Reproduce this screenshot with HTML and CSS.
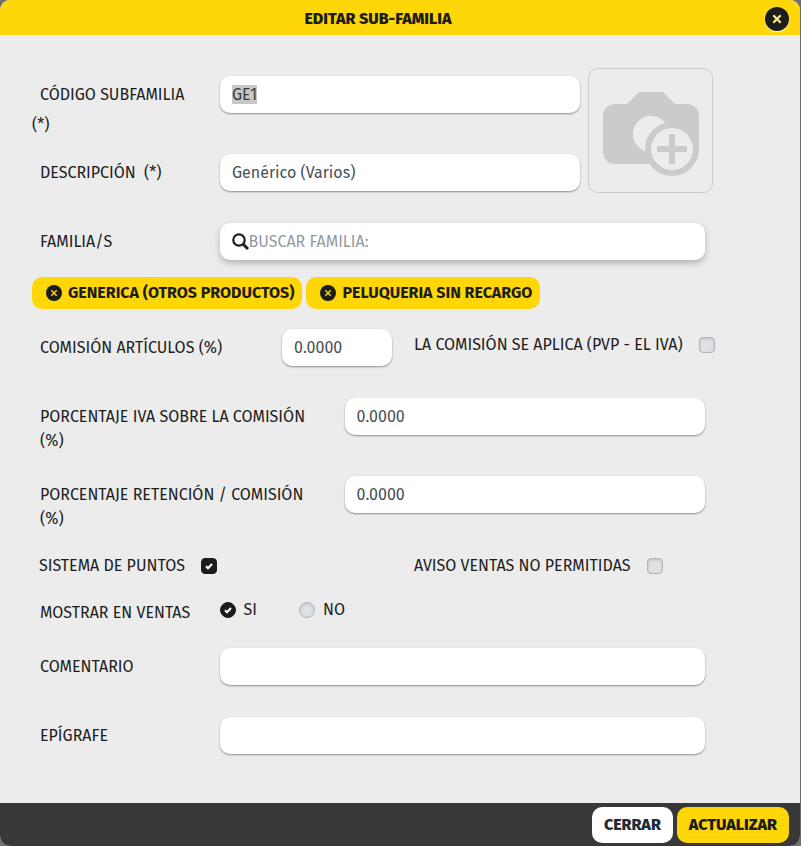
FILE: index.html
```
<!DOCTYPE html>
<html lang="es">
<head>
    <meta charset="UTF-8">
    <meta name="viewport" content="width=device-width, initial-scale=1.0">
    <title>Editar sub-familia</title>
    <link rel="stylesheet" href="styles.css">
</head>
<body>
    <div class="modal" role="dialog" aria-labelledby="modal-title">
        <header class="modal-header">
            <h1 id="modal-title">EDITAR SUB-FAMILIA</h1>
            <button type="button" class="close-btn" aria-label="Cerrar">
                <svg viewBox="0 0 24 24" width="24" height="24">
                    <circle cx="12" cy="12" r="12" fill="#1d1d1d"/>
                    <path d="M8.3 8.3l7.4 7.4M15.7 8.3l-7.4 7.4" stroke="#ffe98a" stroke-width="2.2"/>
                </svg>
            </button>
        </header>

        <form class="modal-form" id="subfamily-form">
            <div class="top">
                <div class="top-fields">
                    <div class="row tall">
                        <label class="label required" for="code"><span>CÓDIGO SUBFAMILIA</span> (*)</label>
                        <input type="text" class="field" id="code" value="GE1">
                    </div>
                    <div class="row">
                        <label class="label required" for="description"><span>DESCRIPCIÓN</span> (*)</label>
                        <input type="text" class="field" id="description" value="Genérico (Varios)">
                    </div>
                </div>
                <button type="button" class="photo" aria-label="Imagen">
                    <svg viewBox="0 0 96 84" width="96" height="84">
                        <path fill="#cbcbcb" d="M36 0h24l12 12h12a12 12 0 0 1 12 12v36H47v12H12A12 12 0 0 1 0 60V24a12 12 0 0 1 12-12h12z"/>
                        <circle cx="48" cy="42" r="18" fill="#ececec"/>
                        <circle cx="69" cy="57" r="27" fill="#cbcbcb"/>
                        <circle cx="69" cy="57" r="21" fill="#ececec"/>
                        <path d="M54 57h30M69 42v30" stroke="#cbcbcb" stroke-width="6"/>
                    </svg>
                </button>
            </div>

            <div class="row short">
                <label class="label" for="family">FAMILIA/S</label>
                <div class="field search">
                    <svg viewBox="0 0 17 17" width="17" height="17">
                        <circle cx="7" cy="7" r="5.7" fill="none" stroke="#1d1d1d" stroke-width="2.2"/>
                        <path d="M11 11l5 5" stroke="#1d1d1d" stroke-width="3"/>
                    </svg>
                    <input type="text" id="family" placeholder="BUSCAR FAMILIA:">
                </div>
            </div>

            <div class="tags">
                <button type="button" class="tag">
                    <svg viewBox="0 0 16 16" width="16" height="16">
                        <circle cx="8" cy="8" r="8" fill="#1d1d1d"/>
                        <path d="M5.3 5.3l5.4 5.4M10.7 5.3l-5.4 5.4" stroke="#ffd708" stroke-width="1.4"/>
                    </svg>
                    GENERICA (OTROS PRODUCTOS)
                </button>
                <button type="button" class="tag">
                    <svg viewBox="0 0 16 16" width="16" height="16">
                        <circle cx="8" cy="8" r="8" fill="#1d1d1d"/>
                        <path d="M5.3 5.3l5.4 5.4M10.7 5.3l-5.4 5.4" stroke="#ffd708" stroke-width="1.4"/>
                    </svg>
                    PELUQUERIA SIN RECARGO
                </button>
            </div>

            <div class="row commission">
                <label class="label" for="commission">COMISIÓN ARTÍCULOS (%)</label>
                <input type="text" class="field" id="commission" value="0.0000">
                <label class="check">LA COMISIÓN SE APLICA (PVP - EL IVA) <input type="checkbox"></label>
            </div>

            <div class="row tall wide">
                <label class="label" for="vat">PORCENTAJE IVA SOBRE LA COMISIÓN (%)</label>
                <input type="text" class="field" id="vat" value="0.0000">
            </div>
            <div class="row tall wide">
                <label class="label" for="retention">PORCENTAJE RETENCIÓN / COMISIÓN (%)</label>
                <input type="text" class="field" id="retention" value="0.0000">
            </div>

            <div class="row checks">
                <label class="check">SISTEMA DE PUNTOS <input type="checkbox" checked></label>
                <label class="check">AVISO VENTAS NO PERMITIDAS <input type="checkbox"></label>
            </div>

            <div class="row show" role="radiogroup" aria-labelledby="show-label">
                <span class="label" id="show-label">MOSTRAR EN VENTAS</span>
                <div class="radios">
                    <label><input type="radio" name="show" checked> SI</label>
                    <label><input type="radio" name="show"> NO</label>
                </div>
            </div>

            <div class="row">
                <label class="label" for="comment">COMENTARIO</label>
                <input type="text" class="field" id="comment">
            </div>
            <div class="row">
                <label class="label" for="heading">EPÍGRAFE</label>
                <input type="text" class="field" id="heading">
            </div>
        </form>

        <footer class="modal-footer">
            <button type="button" class="btn">CERRAR</button>
            <button type="submit" class="btn btn-primary" form="subfamily-form">ACTUALIZAR</button>
        </footer>
    </div>

    <script>
        // Start with the code selected, ready to be replaced
        document.getElementById('code').select();
    </script>
</body>
</html>
```
FILE: styles.css
```
* {
    box-sizing: border-box;
}

body {
    margin: 0;
    background-color: #6f6f6f;
    color: #1d1d1d;
    font-family: "Fira Sans", "Fira Sans Condensed", Roboto, sans-serif;
    font-size: 16px;
    line-height: 24px;
}

input, button {
    font: inherit;
    color: inherit;
}

button {
    border: none;
    padding: 0;
    cursor: pointer;
}

svg {
    display: block;
    flex-shrink: 0;
}

/* Modal */
.modal {
    margin-right: 1px;
    border-radius: 10px;
    overflow: hidden;
    background-color: #ececec;
}

.modal-header {
    position: relative;
    padding: 7px 48px 4px;
    background-color: #ffd708;
    text-align: center;
}

.modal-header h1 {
    margin: 0 44px 0 0;
    font-size: 16px;
    font-weight: 800;
}

.close-btn {
    position: absolute;
    top: 7px;
    right: 11px;
    border-radius: 50%;
    background-color: transparent;
    box-shadow: 0 1px 1px #fff;
}

.modal-form {
    padding: 33px 18px 25px 32px;
}

/* Rows */
.row {
    display: grid;
    grid-template-columns: 3fr 8fr 1fr;
    align-items: start;
    min-height: 69px;
}

.row.tall {
    min-height: 78px;
}

.row.short {
    min-height: 62px;
}

.row.wide {
    grid-template-columns: 5fr 6fr 1fr;
}

.label {
    padding: 15px 8px 0;
}

.wide .label {
    padding-right: 24px;
}

.label.required {
    padding: 12px 16px 0 0;
    line-height: 30px;
}

.required span {
    padding: 0 4px 0 8px;
}

.field {
    height: 37px;
    margin: 8px 15px 0 0;
    padding: 0 12px;
    border: none;
    border-radius: 10px;
    outline: none;
    background-color: #fff;
    box-shadow: 0 1px 2px rgba(0, 0, 0, 0.4);
    color: #495057;
    min-width: 0;
}

.field::selection {
    background-color: #c8c8c8;
    color: #3c3c3c;
}

/* Code, description and picture */
.top {
    display: flex;
    gap: 8px;
    height: 147px;
    padding-right: 69px;
}

.top-fields {
    flex: 1;
}

.top .row {
    grid-template-columns: 188px 1fr;
}

.top .field {
    margin-right: 0;
}

.photo {
    display: flex;
    align-items: center;
    justify-content: center;
    width: 125px;
    height: 125px;
    padding-top: 6px;
    border: 1px solid #cbcbcb;
    border-radius: 10px;
    background-color: transparent;
}

/* Family search */
.search {
    display: flex;
    align-items: center;
    box-shadow: 0 3px 6px rgba(0, 0, 0, 0.25);
}

.search input {
    flex: 1;
    padding: 0;
    border: none;
    outline: none;
    background-color: transparent;
}

.search input::placeholder {
    color: #939ba2;
}

.tags {
    display: flex;
    gap: 4px;
    margin-bottom: 12px;
}

.tag {
    display: flex;
    align-items: center;
    gap: 6px;
    height: 32px;
    padding: 0 8px 0 14px;
    border-radius: 10px;
    background-color: #ffd708;
    font-weight: bold;
    white-space: nowrap;
}

/* Checkboxes and radios */
.row.commission {
    grid-template-columns: 4fr 2fr 6fr;
}

.check {
    display: flex;
    align-items: center;
    gap: 16px;
    padding: 8px 0 0 7px;
}

.commission .check {
    padding-top: 12px;
}

.row.checks {
    grid-template-columns: 1fr 1fr;
    min-height: 46px;
}

.row.show {
    grid-template-columns: 3fr 9fr;
    min-height: 48px;
}

.show .label {
    padding-top: 9px;
}

.radios {
    display: flex;
    gap: 42px;
    padding-top: 6px;
}

.radios label {
    display: flex;
    align-items: center;
    gap: 8px;
}

input[type="checkbox"],
input[type="radio"] {
    appearance: none;
    width: 16px;
    height: 16px;
    margin: 0;
    border: 1px solid #adb5bd;
    border-radius: 4px;
    background-color: #dee2e6;
    box-shadow: inset 0 1px 3px rgba(0, 0, 0, 0.15);
}

input[type="radio"] {
    border-radius: 50%;
}

input[type="checkbox"]:checked,
input[type="radio"]:checked {
    border-color: #1d1d1d;
    background: #1d1d1d url("data:image/svg+xml,%3Csvg xmlns='http://www.w3.org/2000/svg' viewBox='0 0 8 8'%3E%3Cpath d='M1 4.2l2 2 4-4.2' fill='none' stroke='%23fff' stroke-width='2'/%3E%3C/svg%3E") center / 8px no-repeat;
}

/* Footer */
.modal-footer {
    display: flex;
    justify-content: flex-end;
    gap: 4px;
    padding: 4px 11px 3px;
    background-color: #383838;
}

.btn {
    height: 36px;
    padding: 0 12px;
    border-radius: 10px;
    background-color: #fff;
    color: #212b38;
    font-weight: 800;
}

.btn-primary {
    background-color: #ffd708;
    color: #1d1d1d;
}
```
